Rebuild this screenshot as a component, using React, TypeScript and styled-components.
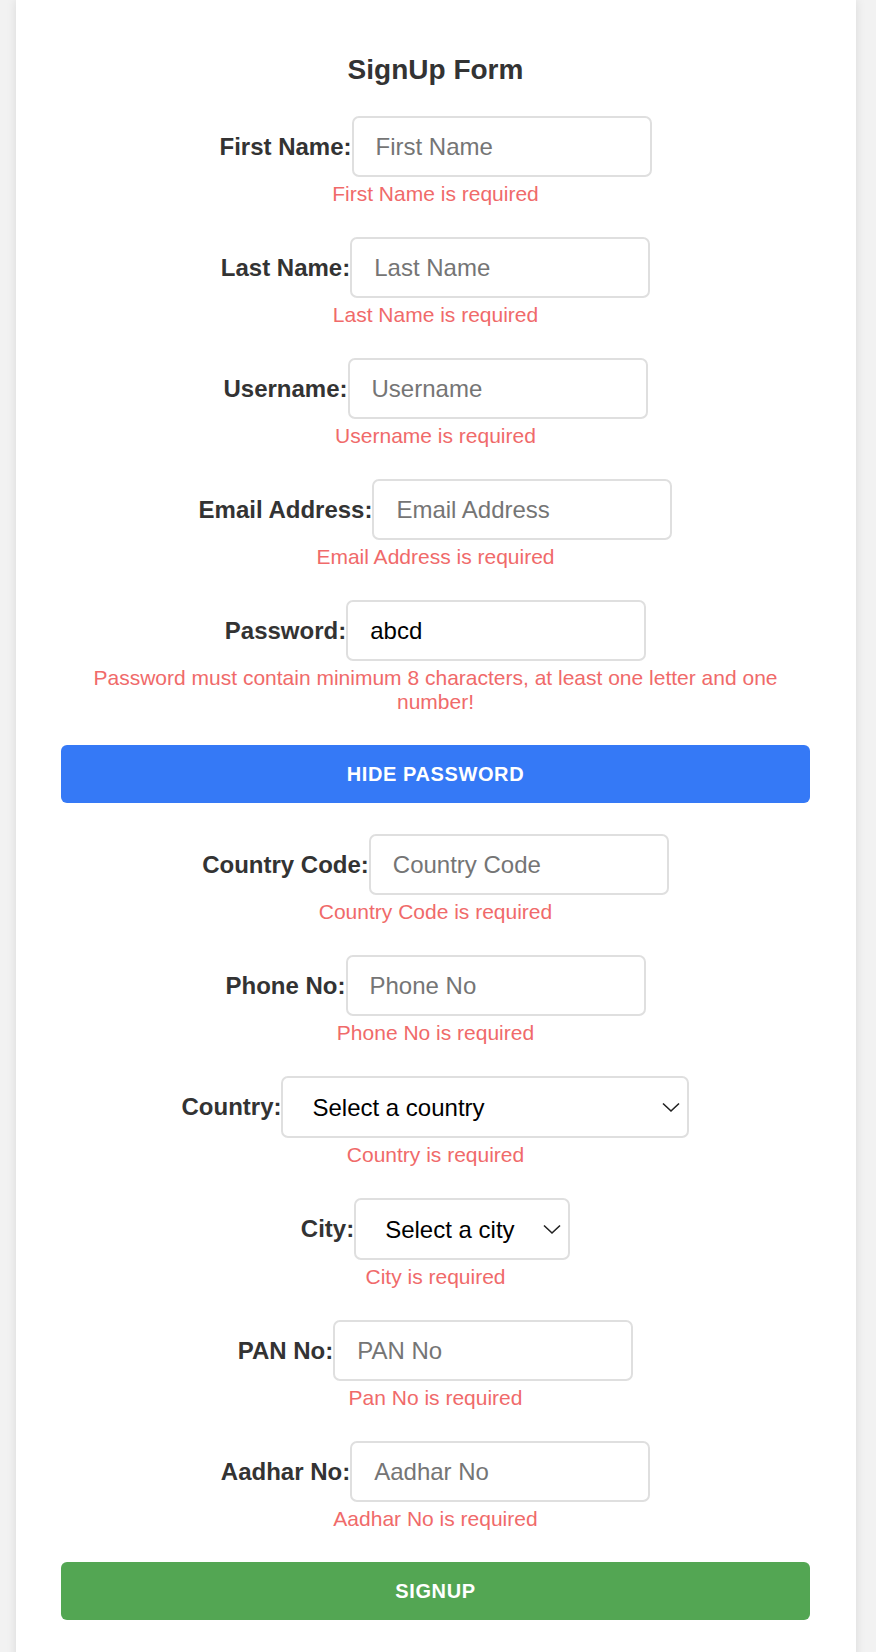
import styled, { createGlobalStyle } from 'styled-components';

const GlobalStyle = createGlobalStyle`
  html, body {
    margin: 0;
    padding: 0;
    background: #f2f2f2;
    font-family: "Liberation Sans", Arial, Helvetica, sans-serif;
  }
`;

interface FieldDef {
  label: string;
  placeholder: string;
  error: string;
  value?: string;
}

const topFields: FieldDef[] = [
  { label: 'First Name:', placeholder: 'First Name', error: 'First Name is required' },
  { label: 'Last Name:', placeholder: 'Last Name', error: 'Last Name is required' },
  { label: 'Username:', placeholder: 'Username', error: 'Username is required' },
  { label: 'Email Address:', placeholder: 'Email Address', error: 'Email Address is required' },
  {
    label: 'Password:',
    placeholder: 'Password',
    value: 'abcd',
    error: 'Password must contain minimum 8 characters, at least one letter and one number!',
  },
];

const contactFields: FieldDef[] = [
  { label: 'Country Code:', placeholder: 'Country Code', error: 'Country Code is required' },
  { label: 'Phone No:', placeholder: 'Phone No', error: 'Phone No is required' },
];

const idFields: FieldDef[] = [
  { label: 'PAN No:', placeholder: 'PAN No', error: 'Pan No is required' },
  { label: 'Aadhar No:', placeholder: 'Aadhar No', error: 'Aadhar No is required' },
];

const Chevron = () => (
  <ChevronIcon width="18" height="10" viewBox="0 0 18 10">
    <path d="M1 1 L9 8.5 L17 1" fill="none" stroke="#222" strokeWidth="1.6" />
  </ChevronIcon>
);

const TextField = ({ label, placeholder, error, value }: FieldDef) => (
  <Field>
    <Row>
      <Label>{label}</Label>
      <Input placeholder={placeholder} defaultValue={value} />
    </Row>
    <ErrorText>{error}</ErrorText>
  </Field>
);

interface SelectFieldProps {
  label: string;
  placeholder: string;
  error: string;
  width: number;
}

const SelectField = ({ label, placeholder, error, width }: SelectFieldProps) => (
  <Field>
    <Row>
      <Label>{label}</Label>
      <SelectWrap $width={width}>
        <Select defaultValue="">
          <option value="">{placeholder}</option>
        </Select>
        <Chevron />
      </SelectWrap>
    </Row>
    <ErrorText>{error}</ErrorText>
  </Field>
);

export default function App() {
  return (
    <>
      <GlobalStyle />
      <Page>
        <Card>
          <Title>SignUp Form</Title>
          <Form onSubmit={(e) => e.preventDefault()}>
            {topFields.map((f) => (
              <TextField key={f.label} {...f} />
            ))}
            <Button type="button" $color="#3579f6">
              Hide Password
            </Button>
            {contactFields.map((f) => (
              <TextField key={f.label} {...f} />
            ))}
            <SelectField label="Country:" placeholder="Select a country" error="Country is required" width={408} />
            <SelectField label="City:" placeholder="Select a city" error="City is required" width={216} />
            {idFields.map((f) => (
              <TextField key={f.label} {...f} />
            ))}
            <Button type="submit" $color="#53a653">
              Signup
            </Button>
          </Form>
        </Card>
      </Page>
    </>
  );
}

const Page = styled.div`
  min-height: 100vh;
  padding: 0 20px 0 16px;
  box-sizing: border-box;
  display: flex;
`;

const Card = styled.div`
  width: 840px;
  background: #fff;
  box-shadow: 0 0 10px rgba(0, 0, 0, 0.1);
  padding: 0 46px 40px 45px;
  box-sizing: border-box;
`;

const Title = styled.h3`
  margin: 54px 0 30px;
  font-size: 28px;
  line-height: 32px;
  font-weight: 700;
  color: #333;
  text-align: center;
`;

const Form = styled.form`
  display: flex;
  flex-direction: column;
`;

const Field = styled.div`
  display: flex;
  flex-direction: column;
  align-items: center;
  margin-bottom: 31px;
`;

const Row = styled.div`
  display: flex;
  align-items: center;
  justify-content: center;
`;

const Label = styled.label`
  font-size: 24px;
  font-weight: 700;
  color: #333;
  white-space: nowrap;
`;

const Input = styled.input`
  width: 300px;
  height: 61px;
  box-sizing: border-box;
  border: 2px solid #dfdfdf;
  border-radius: 7px;
  padding: 0 22px;
  font-family: inherit;
  font-size: 24px;
  color: #000;
  outline: none;
  &::placeholder {
    color: #757575;
  }
`;

const SelectWrap = styled.div<{ $width: number }>`
  position: relative;
  width: ${(p) => p.$width}px;
`;

const Select = styled.select`
  appearance: none;
  width: 100%;
  height: 62px;
  box-sizing: border-box;
  border: 2px solid #dfdfdf;
  border-radius: 7px;
  padding: 0 40px 0 29px;
  background: #fff;
  font-family: inherit;
  font-size: 24px;
  color: #000;
  outline: none;
`;

const ChevronIcon = styled.svg`
  position: absolute;
  right: 9px;
  top: 50%;
  transform: translateY(-45%);
  pointer-events: none;
`;

const ErrorText = styled.div`
  margin-top: 5px;
  font-size: 21px;
  line-height: 24px;
  color: #f06a6a;
  text-align: center;
`;

const Button = styled.button<{ $color: string }>`
  height: 58px;
  margin: 0 0 31px;
  border: none;
  border-radius: 6px;
  background: ${(p) => p.$color};
  color: #fff;
  font-family: inherit;
  font-size: 20px;
  font-weight: 700;
  letter-spacing: 0.6px;
  text-transform: uppercase;
  cursor: pointer;
`;
